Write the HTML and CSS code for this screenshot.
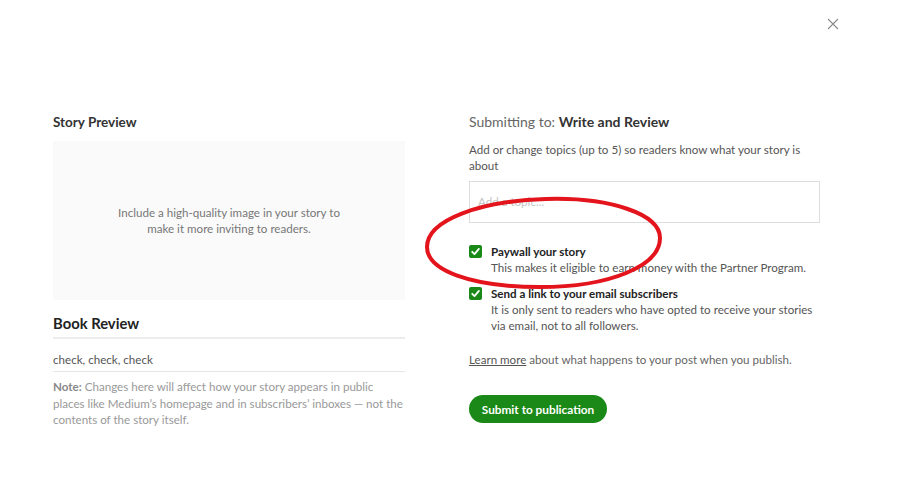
FILE: index.html
```html
<!DOCTYPE html>
<html lang="en">
<head>
    <meta charset="UTF-8">
    <title>Submit to publication</title>
    <link rel="stylesheet" href="styles.css">
</head>
<body>
    <div class="overlay">
        <button class="close-button" aria-label="Close">
            <svg width="12" height="12" viewBox="0 0 12 12"><path d="M1 1L11 11M11 1L1 11" stroke="#8a8a8a" stroke-width="1.1" fill="none"/></svg>
        </button>

        <div class="publish-dialog">
            <div class="preview-column">
                <h3 class="column-title">Story Preview</h3>
                <div class="image-placeholder">
                    Include a high-quality image in your story to<br>make it more inviting to readers.
                </div>
                <div class="preview-title">Book Review</div>
                <div class="preview-subtitle">check, check, check</div>
                <p class="preview-note"><span class="note-label">Note:</span> Changes here will affect how your story appears in public places like Medium’s homepage and in subscribers’ inboxes — not the contents of the story itself.</p>
            </div>

            <div class="options-column">
                <h3 class="submitting-to">Submitting to: <strong>Write and Review</strong></h3>
                <p class="topics-hint">Add or change topics (up to 5) so readers know what your story is about</p>
                <div class="topic-input">Add a topic...</div>

                <label class="check-row">
                    <span class="check-box"><svg width="13" height="13" viewBox="0 0 13 13"><path d="M3.2 6.8L5.5 9.1L9.9 3.9" stroke="#fff" stroke-width="1.8" fill="none" stroke-linecap="round" stroke-linejoin="round"/></svg></span>
                    <span class="check-text">
                        <span class="check-title">Paywall your story</span>
                        <span class="check-desc">This makes it eligible to earn money with the Partner Program.</span>
                    </span>
                </label>

                <label class="check-row">
                    <span class="check-box"><svg width="13" height="13" viewBox="0 0 13 13"><path d="M3.2 6.8L5.5 9.1L9.9 3.9" stroke="#fff" stroke-width="1.8" fill="none" stroke-linecap="round" stroke-linejoin="round"/></svg></span>
                    <span class="check-text">
                        <span class="check-title">Send a link to your email subscribers</span>
                        <span class="check-desc">It is only sent to readers who have opted to receive your stories via email, not to all followers.</span>
                    </span>
                </label>

                <p class="learn-more"><a href="#">Learn more</a> about what happens to your post when you publish.</p>

                <button class="submit-button">Submit to publication</button>
            </div>
        </div>

        <!-- hand-drawn annotation on the screenshot -->
        <svg class="annotation" width="918" height="495" viewBox="0 0 918 495">
            <path d="M546 199 C610 197 660 214 660 238 C660 266 610 287 540 287 C470 287 427 270 427 247 C427 220 480 201 546 199 Z" fill="none" stroke="#e3141c" stroke-width="4"/>
        </svg>
    </div>
</body>
</html>
```

FILE: styles.css
```css
body {
    margin: 0;
    font-family: Lato, "Open Sans", sans-serif;
    background: #fff;
    color: #333;
}

.overlay {
    position: relative;
    width: 918px;
    height: 495px;
}

.close-button {
    position: absolute;
    top: 18px;
    right: 79px;
    background: none;
    border: none;
    padding: 0;
    cursor: pointer;
    line-height: 0;
}

.publish-dialog {
    display: flex;
    gap: 64px;
    padding: 112px 0 0 53px;
}

.preview-column {
    width: 352px;
}

.options-column {
    width: 351px;
}

.column-title {
    font-size: 13.5px;
    font-weight: 700;
    color: #333;
    margin: 0 0 9px;
    line-height: 20px;
}

.image-placeholder {
    height: 159px;
    background: #fafafa;
    color: #777;
    font-size: 11.6px;
    line-height: 16px;
    text-align: center;
    display: flex;
    align-items: center;
    justify-content: center;
}

.preview-title {
    font-size: 14.8px;
    font-weight: 700;
    color: #222;
    line-height: 22px;
    margin-top: 12px;
    padding-bottom: 3px;
    border-bottom: 2px solid #ececec;
}

.preview-subtitle {
    font-size: 11.6px;
    color: #555;
    line-height: 18px;
    padding: 12px 0 2px;
    border-bottom: 1px solid #e6e6e6;
}

.preview-note {
    font-size: 11.6px;
    line-height: 16.5px;
    color: #999;
    margin: 7px 0 0;
}

.note-label {
    font-weight: 700;
    color: #888;
}

.submitting-to {
    font-size: 14px;
    font-weight: 400;
    color: #666;
    margin: 0 0 10px;
    line-height: 20px;
}

.submitting-to strong {
    color: #333;
}

.topics-hint {
    font-size: 11.6px;
    line-height: 16px;
    color: #555;
    margin: 0 0 7px;
}

.topic-input {
    height: 40px;
    border: 1px solid #ddd;
    font-size: 11.6px;
    color: #c4c4c4;
    padding: 0 8px;
    line-height: 40px;
    margin-bottom: 21px;
}

.check-row {
    display: flex;
    gap: 9px;
    margin-bottom: 10px;
    cursor: pointer;
}

.check-box {
    flex: none;
    width: 13px;
    height: 13px;
    margin-top: 1px;
    background: #1a8917;
    border-radius: 2px;
    line-height: 0;
}

.check-text {
    display: flex;
    flex-direction: column;
    font-size: 11.6px;
    line-height: 16px;
}

.check-title {
    font-weight: 700;
    color: #222;
}

.check-desc {
    color: #555;
}

.learn-more {
    font-size: 11.6px;
    line-height: 16px;
    color: #666;
    margin: 18px 0 0;
}

.learn-more a {
    color: #555;
}

.submit-button {
    margin-top: 27px;
    height: 28px;
    width: 138px;
    border: none;
    border-radius: 14px;
    background: #1a8917;
    color: #fff;
    font-family: inherit;
    font-size: 11.8px;
    font-weight: 700;
    white-space: nowrap;
    cursor: pointer;
}

.annotation {
    position: absolute;
    top: 0;
    left: 0;
    pointer-events: none;
}
```
